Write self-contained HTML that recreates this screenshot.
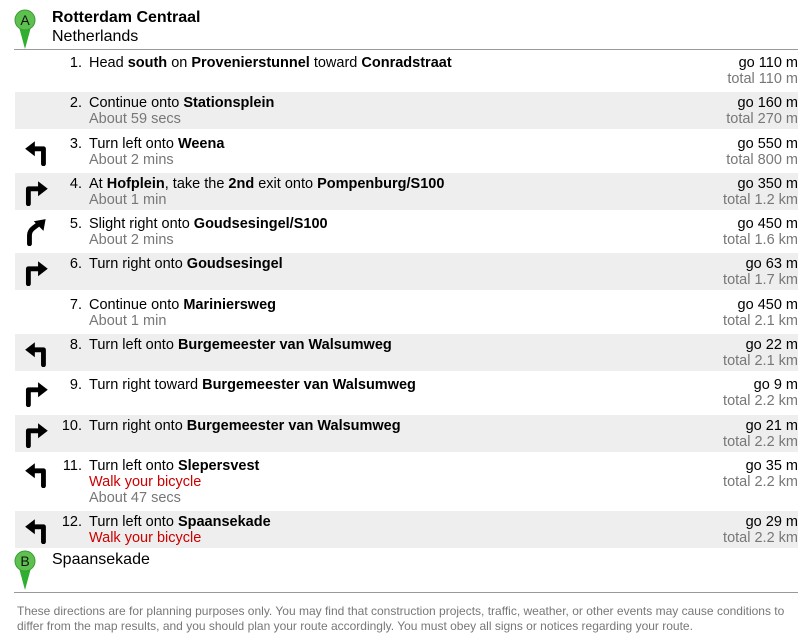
<!DOCTYPE html>
<html><head><meta charset="utf-8"><style>
body{margin:0;width:808px;height:637px;background:#fff;font-family:"Liberation Sans",Arial,sans-serif;font-size:14.5px;color:#000;position:relative;overflow:hidden}
.hdr{position:absolute;left:52px;font-size:16px;line-height:19px}
.hr{position:absolute;left:14px;width:784px;height:1px;background:#999}
.rows{position:absolute;left:15px;top:52px;width:783px}
.r{position:relative;height:37px;margin-bottom:3.3px;line-height:16px}
.r.g{background:#eee}
.n{position:absolute;right:calc(783px - 67px);top:3px}
.t{position:absolute;left:74px;top:3px}
.d{position:absolute;right:0;top:3px;text-align:right}
.s{color:#777}
.red{color:#c00}
svg.ic{position:absolute;left:9px;top:5px}
.foot{position:absolute;left:17px;top:604px;font-size:12px;line-height:15px;color:#777;width:790px}
</style></head><body>
<svg style="position:absolute;left:13px;top:8px" width="24" height="42" viewBox="0 0 24 42"><path d="M6 19 L12 41 L18 19Z" fill="#2fae2f"/><circle cx="12" cy="12" r="10" fill="#5ec14f" stroke="#3a9a36"/><text x="12" y="17" font-family="Liberation Sans" font-size="14" text-anchor="middle" fill="#111">A</text></svg>
<div class="hdr" style="top:8px"><b>Rotterdam Centraal</b><br>Netherlands</div>
<div class="hr" style="top:49px"></div>
<div class="rows">
<div class="r"><div class="n">1.</div><div class="t">Head <b>south</b> on <b>Provenierstunnel</b> toward <b>Conradstraat</b></div><div class="d">go 110 m<br><span class="s">total 110 m</span></div></div>
<div class="r g"><div class="n">2.</div><div class="t">Continue onto <b>Stationsplein</b><br><span class="s">About 59 secs</span></div><div class="d">go 160 m<br><span class="s">total 270 m</span></div></div>
<div class="r"><svg class="ic" width="26" height="28" viewBox="0 0 24 26"><path d="M18 24V10H8" fill="none" stroke="#000" stroke-width="4.5" stroke-linecap="round" stroke-linejoin="round"/><path d="M1 10L10 3V17Z" fill="#000"/></svg><div class="n">3.</div><div class="t">Turn left onto <b>Weena</b><br><span class="s">About 2 mins</span></div><div class="d">go 550 m<br><span class="s">total 800 m</span></div></div>
<div class="r g"><svg class="ic" width="26" height="28" viewBox="0 0 24 26"><path d="M4 24V10H14" fill="none" stroke="#000" stroke-width="4.5" stroke-linecap="round" stroke-linejoin="round"/><path d="M22 10L13 3V17Z" fill="#000"/></svg><div class="n">4.</div><div class="t">At <b>Hofplein</b>, take the <b>2nd</b> exit onto <b>Pompenburg/S100</b><br><span class="s">About 1 min</span></div><div class="d">go 350 m<br><span class="s">total 1.2 km</span></div></div>
<div class="r"><svg class="ic" width="26" height="28" viewBox="0 0 24 26"><path d="M5 24V16Q5 12 9 9L13 6" fill="none" stroke="#000" stroke-width="4.5" stroke-linecap="round" stroke-linejoin="round"/><path d="M20 1L9 3L18 12Z" fill="#000"/></svg><div class="n">5.</div><div class="t">Slight right onto <b>Goudsesingel/S100</b><br><span class="s">About 2 mins</span></div><div class="d">go 450 m<br><span class="s">total 1.6 km</span></div></div>
<div class="r g"><svg class="ic" width="26" height="28" viewBox="0 0 24 26"><path d="M4 24V10H14" fill="none" stroke="#000" stroke-width="4.5" stroke-linecap="round" stroke-linejoin="round"/><path d="M22 10L13 3V17Z" fill="#000"/></svg><div class="n">6.</div><div class="t">Turn right onto <b>Goudsesingel</b></div><div class="d">go 63 m<br><span class="s">total 1.7 km</span></div></div>
<div class="r"><div class="n">7.</div><div class="t">Continue onto <b>Mariniersweg</b><br><span class="s">About 1 min</span></div><div class="d">go 450 m<br><span class="s">total 2.1 km</span></div></div>
<div class="r g"><svg class="ic" width="26" height="28" viewBox="0 0 24 26"><path d="M18 24V10H8" fill="none" stroke="#000" stroke-width="4.5" stroke-linecap="round" stroke-linejoin="round"/><path d="M1 10L10 3V17Z" fill="#000"/></svg><div class="n">8.</div><div class="t">Turn left onto <b>Burgemeester van Walsumweg</b></div><div class="d">go 22 m<br><span class="s">total 2.1 km</span></div></div>
<div class="r"><svg class="ic" width="26" height="28" viewBox="0 0 24 26"><path d="M4 24V10H14" fill="none" stroke="#000" stroke-width="4.5" stroke-linecap="round" stroke-linejoin="round"/><path d="M22 10L13 3V17Z" fill="#000"/></svg><div class="n">9.</div><div class="t">Turn right toward <b>Burgemeester van Walsumweg</b></div><div class="d">go 9 m<br><span class="s">total 2.2 km</span></div></div>
<div class="r g"><svg class="ic" width="26" height="28" viewBox="0 0 24 26"><path d="M4 24V10H14" fill="none" stroke="#000" stroke-width="4.5" stroke-linecap="round" stroke-linejoin="round"/><path d="M22 10L13 3V17Z" fill="#000"/></svg><div class="n">10.</div><div class="t">Turn right onto <b>Burgemeester van Walsumweg</b></div><div class="d">go 21 m<br><span class="s">total 2.2 km</span></div></div>
<div class="r" style="height:53px"><svg class="ic" width="26" height="28" viewBox="0 0 24 26"><path d="M18 24V10H8" fill="none" stroke="#000" stroke-width="4.5" stroke-linecap="round" stroke-linejoin="round"/><path d="M1 10L10 3V17Z" fill="#000"/></svg><div class="n">11.</div><div class="t">Turn left onto <b>Slepersvest</b><br><span class="red">Walk your bicycle</span><br><span class="s">About 47 secs</span></div><div class="d">go 35 m<br><span class="s">total 2.2 km</span></div></div>
<div class="r g"><svg class="ic" width="26" height="28" viewBox="0 0 24 26"><path d="M18 24V10H8" fill="none" stroke="#000" stroke-width="4.5" stroke-linecap="round" stroke-linejoin="round"/><path d="M1 10L10 3V17Z" fill="#000"/></svg><div class="n">12.</div><div class="t">Turn left onto <b>Spaansekade</b><br><span class="red">Walk your bicycle</span></div><div class="d">go 29 m<br><span class="s">total 2.2 km</span></div></div>
</div>
<svg style="position:absolute;left:13px;top:549px" width="24" height="42" viewBox="0 0 24 42"><path d="M6 19 L12 41 L18 19Z" fill="#2fae2f"/><circle cx="12" cy="12" r="10" fill="#5ec14f" stroke="#3a9a36"/><text x="12" y="17" font-family="Liberation Sans" font-size="14" text-anchor="middle" fill="#111">B</text></svg>
<div class="hdr" style="top:550px">Spaansekade</div>
<div class="hr" style="top:592px"></div>
<div class="foot">These directions are for planning purposes only. You may find that construction projects, traffic, weather, or other events may cause conditions to differ from the map results, and you should plan your route accordingly. You must obey all signs or notices regarding your route.</div>
</body></html>
